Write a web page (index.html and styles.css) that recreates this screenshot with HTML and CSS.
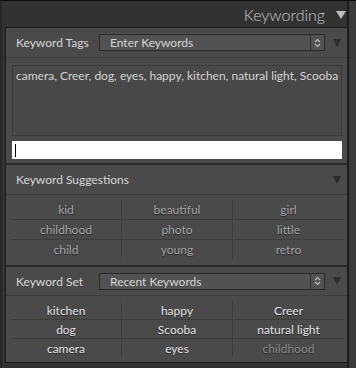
FILE: index.html
```html
<!DOCTYPE html>
<html lang="en">
<head>
    <meta charset="UTF-8">
    <title>Keywording</title>
    <link rel="stylesheet" href="styles.css">
</head>
<body>
    <div class="frame">
        <div class="main">
            <div class="title">
                <span>Keywording</span>
                <span class="tri-lg"></span>
            </div>
            <div class="panel">
                <section class="sec">
                    <div class="sec-head">
                        <span class="label">Keyword Tags</span>
                        <div class="select">
                            <span>Enter Keywords</span>
                            <span class="stepper">
                                <svg width="7" height="10" viewBox="0 0 7 10"><path d="M1 4 L3.5 1.5 L6 4 M1 6 L3.5 8.5 L6 6" fill="none" stroke="#bbb" stroke-width="1.2"/></svg>
                            </span>
                        </div>
                        <span class="tri"></span>
                    </div>
                    <div class="tags-body">
                        <div class="tags">camera, Creer, dog, eyes, happy, kitchen, natural light, Scooba</div>
                        <div class="entry"><span class="caret"></span></div>
                    </div>
                </section>
                <section class="sec">
                    <div class="sec-head">
                        <span class="label">Keyword Suggestions</span>
                        <span class="tri tri-end"></span>
                    </div>
                    <div class="grid dim">
                        <span>kid</span><span>beautiful</span><span>girl</span>
                        <span>childhood</span><span>photo</span><span>little</span>
                        <span>child</span><span>young</span><span>retro</span>
                    </div>
                </section>
                <section class="sec last">
                    <div class="sec-head">
                        <span class="label">Keyword Set</span>
                        <div class="select">
                            <span>Recent Keywords</span>
                            <span class="stepper">
                                <svg width="7" height="10" viewBox="0 0 7 10"><path d="M1 4 L3.5 1.5 L6 4 M1 6 L3.5 8.5 L6 6" fill="none" stroke="#bbb" stroke-width="1.2"/></svg>
                            </span>
                        </div>
                        <span class="tri"></span>
                    </div>
                    <div class="grid">
                        <span>kitchen</span><span>happy</span><span>Creer</span>
                        <span>dog</span><span>Scooba</span><span>natural light</span>
                        <span>camera</span><span>eyes</span><span class="off">childhood</span>
                    </div>
                </section>
            </div>
        </div>
        <div class="track"></div>
    </div>
</body>
</html>
```

FILE: styles.css
```css
body {
    margin: 0;
    background: #2f2f2f;
    font-family: Lato, "Open Sans", sans-serif;
    font-size: 12px;
}
.frame {
    display: flex;
    height: 367px;
    border-top: 1px solid #0c0c0c;
    overflow: hidden;
}
.main {
    width: 345px;
    background: #323232;
    border-left: 2px solid #272727;
    border-right: 2px solid #1c1c1c;
}
.track {
    flex: 1;
    background: #3a3a3a;
}
.title {
    height: 26px;
    display: flex;
    align-items: center;
    justify-content: flex-end;
    gap: 11px;
    padding-right: 1px;
    color: #cacaca;
    font-size: 16px;
    font-weight: 300;
}
.tri-lg {
    width: 0;
    height: 0;
    border-left: 5px solid transparent;
    border-right: 5px solid transparent;
    border-top: 8px solid #bdbdbd;
    margin-top: 1px;
}
.panel {
    margin-left: 3px;
    background: #4a4a4a;
    border-top: 1px solid #1d1d1d;
    border-left: 1px solid #1d1d1d;
    border-bottom: 1px solid #1d1d1d;
}
.sec {
    border-bottom: 2px solid #2a2a2a;
}
.sec.last {
    border-bottom: none;
}
.sec-head {
    height: 29px;
    display: flex;
    align-items: center;
    padding-left: 10px;
    border-bottom: 1px solid #3e3e3e;
    color: #d6d6d6;
}
.last .sec-head {
    height: 28px;
}
.label {
    min-width: 83px;
    white-space: nowrap;
}
.select {
    width: 214px;
    height: 15px;
    display: flex;
    align-items: center;
    justify-content: space-between;
    background: #525252;
    border: 1px solid #2a2a2a;
    padding-left: 10px;
}
.stepper {
    width: 13px;
    height: 15px;
    display: flex;
    align-items: center;
    justify-content: center;
    border-left: 1px solid #2e2e2e;
}
.tri {
    width: 0;
    height: 0;
    margin-left: 8px;
    border-left: 4px solid transparent;
    border-right: 4px solid transparent;
    border-top: 8px solid #2c2c2c;
}
.tri-end {
    margin-left: auto;
    margin-right: 6px;
}
.tags-body {
    padding: 7px 5px 4px 6px;
}
.tags {
    height: 67px;
    padding: 2px 0 0 3px;
    background: #484848;
    border: 1px solid #3b3b3b;
    color: #d4d4d4;
}
.entry {
    margin-top: 5px;
    height: 18px;
    background: #fff;
    display: flex;
    align-items: center;
    padding-left: 3px;
}
.caret {
    width: 1px;
    height: 13px;
    background: #000;
}
.grid {
    display: grid;
    grid-template-columns: 110px 112px 111px;
    grid-template-rows: 20px 20px 19px;
    margin: 5px 3px 6px 5px;
    color: #e4e4e4;
    text-shadow: 0 1px 1px #262626;
}
.last .grid {
    grid-template-rows: 19px 19px 18px;
    margin-bottom: 5px;
}
.grid span {
    display: flex;
    align-items: center;
    justify-content: center;
    border-bottom: 1px solid #3c3c3c;
}
.grid span:nth-child(3n+2) {
    border-left: 1px solid #3c3c3c;
    border-right: 1px solid #3c3c3c;
}
.grid span:nth-last-child(-n+3) {
    border-bottom: none;
}
.grid.dim {
    color: #a5a5a5;
}
.grid .off {
    color: #8a8a8a;
}
```
